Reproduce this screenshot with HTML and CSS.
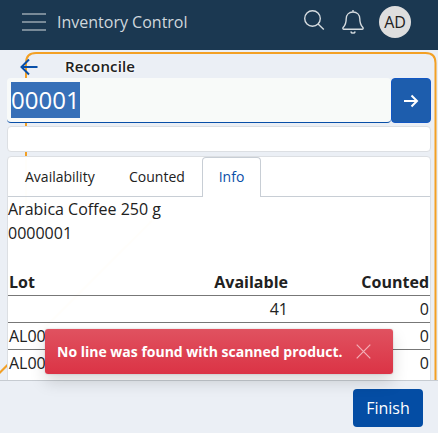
FILE: index.html
```html
<!DOCTYPE html>
<html lang="en">
<head>
<meta charset="utf-8">
<title>Inventory Control</title>
<link rel="stylesheet" href="styles.css">
</head>
<body>
<div class="app">
  <header class="topbar">
    <svg class="menu" width="24" height="20" viewBox="0 0 24 20"><path d="M0 2h24M0 10h24M0 18h24"/></svg>
    <span class="brand">Inventory Control</span>
    <svg class="search" width="22" height="22" viewBox="0 0 22 22"><circle cx="8.500" cy="8.500" r="7.800"/><path d="M14.100 14.100L19.800 19.600"/></svg>
    <svg class="bell" width="22" height="26" viewBox="0 0 22 26"><path d="M11 1v2M11 3C7 3 4.200 5.800 4.200 9.700C4.200 14.400 3.200 16.200 1.300 18.200C.5 19.200 .8 20.300 2 20.300H20C21.200 20.300 21.500 19.200 20.700 18.200C18.800 16.200 17.800 14.400 17.800 9.700C17.800 5.800 15 3 11 3ZM8.800 22.500C9.200 24.700 12.800 24.700 13.200 22.500"/></svg>
    <span class="avatar">AD</span>
  </header>
  <main class="content">
    <svg class="backdrop" width="438" height="330" viewBox="0 0 438 330"><path d="M26 160V13Q26 3 36 3H425.500Q435.500 3 435.500 13V331M-2 324.500L152 170.500"/></svg>
    <div class="heading">
      <svg width="18" height="18" viewBox="0 0 18 18"><path d="M17.500 9H2M9 1.500L1.500 9L9 16.500"/></svg>
      <h1>Reconcile</h1>
    </div>
    <div class="scan">
      <div class="field"><span class="selected">00001</span></div>
      <button class="go" aria-label="Go"><svg width="16" height="14" viewBox="0 0 16 14"><path d="M1 7H14M8.500 1.500L14 7L8.500 12.500"/></svg></button>
    </div>
    <div class="blank"></div>
    <section class="panel">
      <nav class="tabs">
        <span class="tab first">Availability</span><span class="tab second">Counted</span><span class="tab active">Info</span>
      </nav>
      <div class="product">Arabica Coffee 250 g<br>0000001</div>
      <table>
        <thead><tr><th class="lot">Lot</th><th class="avail">Available</th><th>Counted</th></tr></thead>
        <tbody>
          <tr><td class="lot"></td><td>41</td><td>0</td></tr>
          <tr><td class="lot">AL00</td><td></td><td>0</td></tr>
          <tr><td class="lot">AL00</td><td></td><td>0</td></tr>
        </tbody>
      </table>
    </section>
  </main>
  <footer class="footer"><button class="finish">Finish</button></footer>
  <div class="toast"><span>No line was found with scanned product.</span><svg width="15" height="15" viewBox="0 0 15 15"><path d="M.7 .7L14.300 14.300M14.300 .7L.7 14.300"/></svg></div>
</div>
</body>
</html>
```
FILE: styles.css
```css
* { box-sizing: border-box; }
body { margin: 0; font: 16px/24px "Open Sans", "Noto Sans", sans-serif; color: #212121; }
svg { display: block; fill: none; flex: none; }
button { border: 0; padding: 0; font: inherit; color: #fff; }
.app { position: relative; width: 438px; height: 433px; display: flex; flex-direction: column; background: #ebeff5; overflow: hidden; }
.topbar { height: 50px; flex: none; display: flex; align-items: center; padding: 0 27px 6px 22px; background: #1b3851; color: #d0d7dc; }
.topbar svg { stroke: #d5dbdf; stroke-width: 1.4; }
.topbar .menu { stroke: #98a5b0; stroke-width: 1.7; }
.brand { margin-left: 11px; font-size: 16px; flex: 1; white-space: nowrap; }
.topbar .search { margin-top: -3px; margin-right: 16px; }
.bell { margin-right: 15px; }
.avatar { width: 32px; height: 32px; border-radius: 50%; background: #dedede; color: #212121; line-height: 32px; text-align: center; }
.content { position: relative; height: 330px; flex: none; padding: 0 7px; overflow: hidden; }
.backdrop { position: absolute; left: 0; top: 0; stroke: #f3a024; stroke-width: 2; }
.heading { position: relative; height: 28px; display: flex; align-items: flex-start; padding: 8px 0 0 13px; }
.heading svg { stroke: #084fa8; stroke-width: 2; }
h1 { margin: -3px 0 0 27px; font-size: 15px; line-height: 22px; font-weight: 600; letter-spacing: .15px; color: #212121; text-shadow: 0 0 3px #fff, 0 0 5px #fff; }
.scan { position: relative; height: 45px; display: flex; }
.field { flex: 1; padding: 4px; background: #f8faf9; border-bottom: 1px solid #084fa8; border-radius: 4px; }
.selected { display: inline-block; height: 36px; line-height: 36px; font-size: 24px; color: #fff; background: #3770b8; }
.go { width: 40px; border: 1px solid #1257c4; border-radius: 4px; background: #1d5dad; display: grid; place-items: center; }
.go svg { stroke: #fff; stroke-width: 2; }
.blank { position: relative; margin-top: 3px; height: 26px; border: 1px solid #dcdfe3; border-radius: 4px; background: #fff; }
.panel { position: relative; margin-top: 4px; height: 240px; border: 1px solid #dcdfe3; border-radius: 4px; background: rgba(255,255,255,.985); }
.tabs { display: flex; height: 40px; border-bottom: 1px solid #c8ced5; font-size: 14px; line-height: 40px; }
.tab { height: 40px; }
.first { width: 104px; padding-left: 17px; }
.second { width: 90px; padding-left: 17px; }
.active { width: 59px; text-align: center; color: #084fa8; background: #fff; border: 1px solid #c8ced5; border-bottom: 0; border-radius: 4px 4px 0 0; line-height: 38px; }
.product { height: 73px; }
table { width: 100%; border-collapse: separate; border-spacing: 0; table-layout: fixed; }
th, td { height: 27px; padding: 1px 1px; line-height: 24px; text-align: right; border-bottom: 1px solid #777; font-weight: 400; white-space: nowrap; }
th { height: 26px; padding-top: 0; font-weight: 700; }
tbody tr:last-child td { border-bottom-color: transparent; }
.lot { text-align: left; }
th.lot { width: 140px; }
th.avail { width: 141px; }
.footer { height: 53px; flex: none; display: flex; justify-content: flex-end; padding: 8px 15px 7px; border-top: 1px solid #c6cbd1; }
.finish { width: 70px; height: 38px; border-radius: 4px; background: #044da4; }
.toast { position: absolute; left: 45px; top: 329px; width: 348px; height: 45px; display: flex; align-items: center; justify-content: space-between; padding: 0 22px 0 12px; border-radius: 3px; background: linear-gradient(#e05260, #db3345); box-shadow: 0 8px 16px rgba(0,0,0,.15), 0 0 2px rgba(0,0,0,.2); color: #fff; font-size: 14px; font-weight: 700; white-space: nowrap; }
.toast svg { stroke: #f3b0b8; stroke-width: 1.2; }
```
